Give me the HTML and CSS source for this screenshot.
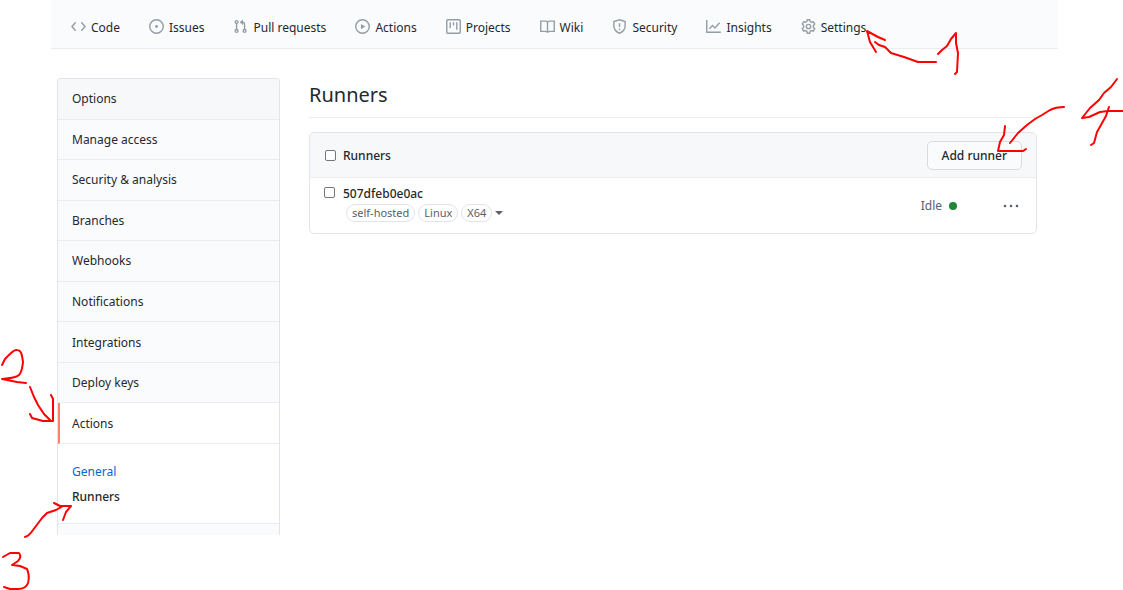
FILE: index.html
```html
<!DOCTYPE html>
<html lang="en">
<head>
<meta charset="utf-8">
<meta name="viewport" content="width=device-width, initial-scale=1">
<title>Runners</title>
<link rel="stylesheet" href="styles.css">
</head>
<body>
<div class="page">
  <nav class="tabs" aria-label="Repository">
    <a class="tab" href="#code"><svg class="icon" viewBox="0 0 16 16" aria-hidden="true"><path d="M5 3.500 1 8l4 4.500M11 3.500 15 8l-4 4.500"/></svg>Code</a>
    <a class="tab" href="#issues"><svg class="icon" viewBox="0 0 16 16" aria-hidden="true"><circle cx="8" cy="8" r="7.200"/><circle class="solid" cx="8" cy="8" r="1.500"/></svg>Issues</a>
    <a class="tab" href="#pulls"><svg class="icon" viewBox="0 0 16 16" aria-hidden="true"><circle cx="2.750" cy="3.250" r="1.500"/><circle cx="2.750" cy="12.750" r="1.500"/><circle cx="11.250" cy="12.750" r="1.500"/><path d="M2.750 5v6M11.250 11V5.500a2 2 0 0 0-2-2H7.500"/><path class="solid" d="M9.500 .5v6L6 3.500z"/></svg>Pull requests</a>
    <a class="tab" href="#actions"><svg class="icon" viewBox="0 0 16 16" aria-hidden="true"><circle cx="8" cy="8" r="7.200"/><path class="solid" d="M6.300 5.200v5.600L11 8z"/></svg>Actions</a>
    <a class="tab" href="#projects"><svg class="icon" viewBox="0 0 16 16" aria-hidden="true"><rect x=".8" y=".8" width="14.400" height="14.400" rx="1"/><path d="M4.500 3.500v6M8 3.500v3.500M11.500 3.500v8"/></svg>Projects</a>
    <a class="tab" href="#wiki"><svg class="icon" viewBox="0 0 16 16" aria-hidden="true"><path d="M8 4c0-1 1-1.700 2.200-1.700h5v10.900h-4.700C9 13.200 8 13.700 8 14.700c0-1-1-1.500-2.500-1.500H.8V2.300h5C7 2.300 8 3 8 4zM8 4v10.500"/></svg>Wiki</a>
    <a class="tab" href="#security"><svg class="icon" viewBox="0 0 16 16" aria-hidden="true"><path d="M8 .8 14 2.800V7.500c0 3.700-2 6-6 7.700-4-1.700-6-4-6-7.700V2.800zM8 4.500v4"/><circle class="solid" cx="8" cy="11" r=".9"/></svg>Security</a>
    <a class="tab" href="#insights"><svg class="icon" viewBox="0 0 16 16" aria-hidden="true"><path d="M.8 1v13.200h15M3.500 10.500 7 7l2.500 2.500 5-5.500"/></svg>Insights</a>
    <a class="tab" href="#settings"><svg class="icon" viewBox="0 0 16 16" aria-hidden="true"><path d="M6.700.8h2.600l.5 2 1.300.7 2-.6 1.500 2.400-1.400 1.600v1.900l1.400 1.600-1.500 2.500-2-.6-1.300.8-.5 2.100H6.700l-.5-2.100-1.300-.8-2 .6-1.500-2.500 1.400-1.600V6.900L1.400 5.300l1.500-2.400 2 .6 1.300-.7z"/><circle cx="8" cy="8" r="2.300"/></svg>Settings</a>
  </nav>

  <div class="layout">
    <aside class="sidebar">
      <nav class="menu" aria-label="Settings">
        <a class="menu-item first" href="#options">Options</a>
        <a class="menu-item" href="#access">Manage access</a>
        <a class="menu-item" href="#analysis">Security &amp; analysis</a>
        <a class="menu-item" href="#branches">Branches</a>
        <a class="menu-item" href="#webhooks">Webhooks</a>
        <a class="menu-item" href="#notifications">Notifications</a>
        <a class="menu-item" href="#integrations">Integrations</a>
        <a class="menu-item" href="#keys">Deploy keys</a>
        <a class="menu-item current" href="#actions-settings">Actions</a>
      </nav>
      <div class="submenu">
        <a class="sub-link" href="#general">General</a>
        <a class="sub-link selected" href="#runners" aria-current="page">Runners</a>
      </div>
      <div class="menu-end"></div>
    </aside>

    <main class="content">
      <h1 class="title">Runners</h1>
      <section class="box">
        <header class="box-header">
          <label class="check-label"><input class="check" type="checkbox">Runners</label>
          <button class="button" type="button">Add runner</button>
        </header>
        <div class="runner">
          <input class="check" type="checkbox" id="runner">
          <div class="runner-info">
            <label class="runner-name" for="runner">507dfeb0e0ac</label>
            <div class="labels">
              <span class="label">self-hosted</span>
              <span class="label">Linux</span>
              <span class="label">X64</span>
              <button class="caret-button" type="button" aria-label="Show labels"><span class="caret"></span></button>
            </div>
          </div>
          <div class="status">Idle<span class="dot"></span></div>
          <button class="more" type="button" aria-label="Runner options"><svg class="more-icon" viewBox="0 0 16 4" aria-hidden="true"><circle cx="2" cy="2" r="1.300"/><circle cx="8" cy="2" r="1.300"/><circle cx="14" cy="2" r="1.300"/></svg></button>
        </div>
      </section>
    </main>
  </div>

  <svg class="ink" width="1123" height="590" viewBox="0 0 1123 590" role="img" aria-label="Steps 1 to 4">
    <path d="M885 40 878 37 867 31 870 42 876 52M875 42 879 45 885 47 891 53 904 57 918 62H936"/>
    <path d="M938 54 942 50 947 46 951 39 956 33V43L958 53 957 72 955 74"/>
    <path d="M2 365 5 359Q14 349 17 350 21 350 22 356L23 362Q22 372 19 375 16 378 2 379L17 382 26 383"/>
    <path d="M30 387 34 397 38 405 44 414 50 420M51 395 53 399V421L43 421 32 418 30 414"/>
    <path d="M25 537Q29 536 33 530L42 518 47 513 56 510 63 506 71 506M54 503 60 506 71 506 66 512 63 520"/>
    <path d="M3 557 10 553H19Q22 557 18 561L12 565 20 566 27 569Q30 576 28 583 26 589 18 589H10L4 587"/>
    <path d="M1064 107Q1056 107 1050 110L1042 115 1035 119 1027 125 1018 133 1010 143M1005 126 1004 135 1000 142 998 151H1023L1026 149"/>
    <path d="M1117 79 1111 87 1104 93 1099 100 1090 108 1082 118 1089 117 1100 112 1108 111H1123M1109 107 1106 116 1097 132 1094 143 1091 145"/>
  </svg>
</div>
</body>
</html>
```
FILE: styles.css
```css
* {
  box-sizing: border-box;
}

body {
  margin: 0;
  background: #fff;
  color: #24292e;
  font: 12px/20px "Noto Sans", "Open Sans", sans-serif;
}

a {
  color: inherit;
  text-decoration: none;
}

button {
  font: inherit;
  color: inherit;
  cursor: pointer;
}

.page {
  position: relative;
  min-height: 100vh;
  padding: 0 65px 0 51px;
  overflow: hidden;
}

.tabs {
  display: flex;
  gap: 29px;
  padding: 18px 20px 10px;
  border-bottom: 1px solid #eaecef;
  background: #fafbfc;
}

.tab {
  display: flex;
  align-items: flex-start;
  gap: 5px;
  white-space: nowrap;
}

.icon {
  width: 15px;
  height: 15px;
  margin-top: 1px;
  flex: none;
  fill: none;
  stroke: #959da5;
  stroke-width: 1.5;
}

.solid {
  fill: #959da5;
  stroke: none;
}

.layout {
  display: flex;
  gap: 29px;
  padding: 29px 21px 0 6px;
}

.sidebar {
  flex: 0 0 223px;
  border: 1px solid #e1e4e8;
  border-bottom: 0;
  border-radius: 4px 4px 0 0;
  overflow: hidden;
}

.menu {
  display: grid;
  grid-auto-rows: 1fr;
  min-height: 365px;
}

.menu-item {
  display: flex;
  align-items: center;
  padding: 1px 14px 0;
  border-bottom: 1px solid #eaecef;
  background: #fafbfc;
}

.first {
  background: #f6f8fa;
}

.current {
  padding-left: 12px;
  border-left: 2px solid #f9826c;
  background: #fff;
}

.submenu {
  display: grid;
  gap: 5px;
  padding: 18px 14px 16px;
  border-bottom: 1px solid #eaecef;
}

.sub-link {
  color: #0366d6;
}

.selected {
  color: #24292e;
  font-weight: 500;
}

.menu-end {
  height: 11px;
  background: #fafbfc;
}

.content {
  flex: 1;
  min-width: 0;
}

.title {
  margin: 0 0 14px;
  padding: 2px 0 7px;
  border-bottom: 1px solid #eaecef;
  font-size: 20px;
  font-weight: 400;
  line-height: 30px;
}

.box {
  border: 1px solid #e1e4e8;
  border-radius: 5px;
}

.box-header {
  display: flex;
  align-items: center;
  justify-content: space-between;
  padding: 8px 14px 7px;
  border-bottom: 1px solid #eaecef;
  border-radius: 4px 4px 0 0;
  background: #f6f8fa;
}

.check-label {
  display: flex;
  align-items: center;
  gap: 7px;
  padding-left: 1px;
  font-weight: 500;
}

.check {
  appearance: none;
  flex: none;
  width: 11px;
  height: 11px;
  margin: 0;
  border: 1px solid #767676;
  border-radius: 2px;
  background: #fff;
}

.check:checked {
  background: #0366d6;
}

.button {
  padding: 3px 14px;
  border: 1px solid #d9dcdf;
  border-radius: 5px;
  background: #fafbfc;
  font-weight: 500;
  line-height: 21px;
}

.runner {
  display: flex;
  padding: 0 17px 0 14px;
}

.runner > .check {
  margin-top: 9px;
}

.runner-info {
  flex: 1;
  padding: 6px 0 11px 8px;
}

.runner-name {
  font-weight: 500;
}

.labels {
  display: flex;
  align-items: center;
  gap: 3px;
  padding-left: 3px;
}

.label {
  padding: 0 5px;
  border: 1px solid #e1e4e8;
  border-radius: 9px;
  color: #586069;
  font-size: 11px;
  line-height: 16px;
}

.caret-button {
  display: flex;
  padding: 0;
  border: 0;
  background: none;
}

.caret {
  border: 4px solid transparent;
  border-top-color: #586069;
  border-bottom: 0;
}

.status {
  display: flex;
  align-items: center;
  align-self: center;
  gap: 7px;
  color: #586069;
}

.dot {
  width: 8px;
  height: 8px;
  border-radius: 50%;
  background: #22863a;
}

.more {
  align-self: center;
  margin-left: 46px;
  padding: 0;
  border: 0;
  background: none;
}

.more-icon {
  display: block;
  width: 16px;
  height: 4px;
  fill: #586069;
}

.ink {
  position: absolute;
  top: 0;
  left: 0;
  pointer-events: none;
  fill: none;
  stroke: #f00;
  stroke-width: 2;
  stroke-linecap: round;
  stroke-linejoin: round;
}
```
